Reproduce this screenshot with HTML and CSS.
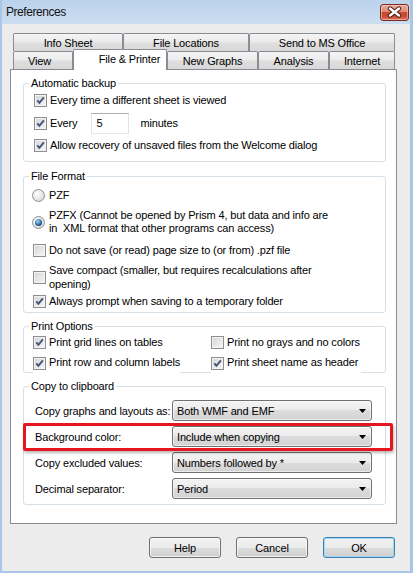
FILE: index.html
```html
<!DOCTYPE html>
<html>
<head>
<meta charset="utf-8">
<title>Preferences</title>
<link rel="stylesheet" href="styles.css">
</head>
<body>
<div class="window">
  <div class="titlebar">
    <span class="title">Preferences</span>
    <span class="close">
      <svg width="27" height="15" viewBox="0 0 27 15">
        <path d="M9 3.5 L18 10.5 M18 3.5 L9 10.5" stroke="#4a1a12" stroke-width="4.4" stroke-linecap="round"/>
        <path d="M9 3.5 L18 10.5 M18 3.5 L9 10.5" stroke="#ffffff" stroke-width="2.4" stroke-linecap="round"/>
      </svg>
    </span>
  </div>
  <div class="dlg">
    <div class="tabs">
      <div class="tabrow">
        <div class="tab t-info">Info Sheet</div>
        <div class="tab t-loc">File Locations</div>
        <div class="tab t-send">Send to MS Office</div>
      </div>
      <div class="tabrow">
        <div class="tab t-view">View</div>
        <div class="tab sel t-file">File &amp; Printer</div>
        <div class="tab t-graphs">New Graphs</div>
        <div class="tab t-anal">Analysis</div>
        <div class="tab t-net">Internet</div>
      </div>
    </div>
    <div class="panel">
      <fieldset class="group g1">
        <legend>Automatic backup</legend>
        <div class="gbody">
          <div class="opt r1"><span class="cb"><svg width="11" height="11" viewBox="0 0 11 11"><path d="M2.3 5.3 L4.4 7.8 L8.9 2.4" fill="none" stroke="#44557a" stroke-width="2"/></svg></span><span>Every time a different sheet is viewed</span></div>
          <div class="opt r2"><span class="cb"><svg width="11" height="11" viewBox="0 0 11 11"><path d="M2.3 5.3 L4.4 7.8 L8.9 2.4" fill="none" stroke="#44557a" stroke-width="2"/></svg></span><span>Every</span><span class="num">5</span><span>minutes</span></div>
          <div class="opt r3"><span class="cb"><svg width="11" height="11" viewBox="0 0 11 11"><path d="M2.3 5.3 L4.4 7.8 L8.9 2.4" fill="none" stroke="#44557a" stroke-width="2"/></svg></span><span>Allow recovery of unsaved files from the Welcome dialog</span></div>
        </div>
      </fieldset>

      <fieldset class="group g2">
        <legend>File Format</legend>
        <div class="gbody">
          <div class="opt f1"><span class="rb"></span><span>PZF</span></div>
          <div class="opt f2"><span class="rb on"></span><span class="two l13">PZFX (Cannot be opened by Prism 4, but data and info are<br>in&nbsp; XML format that other programs can access)</span></div>
          <div class="opt f3"><span class="cb"></span><span>Do not save (or read) page size to (or from) .pzf file</span></div>
          <div class="opt f4"><span class="cb"></span><span class="two l14">Save compact (smaller, but requires recalculations after<br>opening)</span></div>
          <div class="opt f5"><span class="cb"><svg width="11" height="11" viewBox="0 0 11 11"><path d="M2.3 5.3 L4.4 7.8 L8.9 2.4" fill="none" stroke="#44557a" stroke-width="2"/></svg></span><span>Always prompt when saving to a temporary folder</span></div>
        </div>
      </fieldset>

      <fieldset class="group g3">
        <legend>Print Options</legend>
        <div class="gbody">
          <div class="prow p1">
            <div class="opt pc c1"><span class="cb"><svg width="11" height="11" viewBox="0 0 11 11"><path d="M2.3 5.3 L4.4 7.8 L8.9 2.4" fill="none" stroke="#44557a" stroke-width="2"/></svg></span><span>Print grid lines on tables</span></div>
            <div class="opt pc c2"><span class="cb"></span><span>Print no grays and no colors</span></div>
          </div>
          <div class="prow p2">
            <div class="opt pc c1"><span class="cb"><svg width="11" height="11" viewBox="0 0 11 11"><path d="M2.3 5.3 L4.4 7.8 L8.9 2.4" fill="none" stroke="#44557a" stroke-width="2"/></svg></span><span>Print row and column labels</span></div>
            <div class="opt pc c2"><span class="cb"><svg width="11" height="11" viewBox="0 0 11 11"><path d="M2.3 5.3 L4.4 7.8 L8.9 2.4" fill="none" stroke="#44557a" stroke-width="2"/></svg></span><span>Print sheet name as header</span></div>
          </div>
        </div>
      </fieldset>

      <fieldset class="group g4">
        <legend>Copy to clipboard</legend>
        <div class="gbody">
          <div class="crow">
            <span class="clabel">Copy graphs and layouts as:</span>
            <div class="combo"><span>Both WMF and EMF</span><svg width="7" height="4" viewBox="0 0 7 4"><path d="M0 0 H7 L3.5 4 Z" fill="#000"/></svg></div>
          </div>
          <div class="crow hl">
            <span class="clabel">Background color:</span>
            <div class="combo"><span>Include when copying</span><svg width="7" height="4" viewBox="0 0 7 4"><path d="M0 0 H7 L3.5 4 Z" fill="#000"/></svg></div>
          </div>
          <div class="crow">
            <span class="clabel">Copy excluded values:</span>
            <div class="combo"><span>Numbers followed by *</span><svg width="7" height="4" viewBox="0 0 7 4"><path d="M0 0 H7 L3.5 4 Z" fill="#000"/></svg></div>
          </div>
          <div class="crow">
            <span class="clabel">Decimal separator:</span>
            <div class="combo"><span>Period</span><svg width="7" height="4" viewBox="0 0 7 4"><path d="M0 0 H7 L3.5 4 Z" fill="#000"/></svg></div>
          </div>
        </div>
      </fieldset>
    </div>
    <div class="buttons">
      <div class="btn">Help</div>
      <div class="btn">Cancel</div>
      <div class="btn def">OK</div>
    </div>
  </div>
</div>
</body>
</html>
```

FILE: styles.css
```css
* { box-sizing: border-box; }
html, body { margin: 0; padding: 0; }
body {
  font-family: "Liberation Sans", Arial, sans-serif;
  font-size: 11px;
  letter-spacing: -0.15px;
  color: #000;
  background: #ececec;
}
.window {
  width: 413px;
  height: 573px;
  display: flex;
  flex-direction: column;
  background: #ececec;
  border-left: 2px solid #a9c6e7;
  border-right: 3px solid #a9c6e7;
  border-bottom: 2px solid #a9c6e7;
}
.titlebar {
  height: 24px;
  flex: none;
  display: flex;
  justify-content: space-between;
  align-items: flex-start;
  padding-left: 4px;
  background: linear-gradient(#bcd2eb, #cbddf1);
}
.title {
  font-size: 12px;
  letter-spacing: -0.45px;
  line-height: 24px;
  color: #141414;
}
.close {
  width: 29px;
  height: 17px;
  margin-top: 4px;
  margin-right: 1px;
  border: 1px solid #7a2c22;
  border-radius: 3px;
  background: linear-gradient(#eaab9c, #dc8a78 45%, #c84a31 50%, #c94a33 75%, #dc7660);
  box-shadow: inset 0 0 0 1px rgba(255, 220, 210, 0.5);
  display: flex;
}
.dlg {
  flex: 1;
  padding: 9px 0 0 8px;
  display: flex;
  flex-direction: column;
}
.tabs { margin-left: 3px; }
.tabrow {
  display: flex;
  height: 18px;
  align-items: flex-start;
}
.tab {
  height: 18px;
  border: 1px solid #898c95;
  border-bottom: none;
  border-radius: 2px 2px 0 0;
  background: linear-gradient(#f5f5f5, #ebebeb 45%, #dedede 55%, #d8d8d8);
  display: flex;
  align-items: center;
  justify-content: center;
  padding-top: 1px;
  white-space: nowrap;
}
.t-info { width: 110px; }
.t-loc { width: 126px; }
.t-send { width: 146px; }
.t-view { width: 60px; padding-right: 7px; }
.t-file { width: 94px; padding-left: 19px; }
.t-graphs { width: 91px; }
.t-anal { width: 71px; }
.t-net { width: 66px; }
.tab.sel {
  height: 21px;
  margin-top: -2px;
  margin-bottom: -1px;
  background: #fff;
  position: relative;
  z-index: 1;
  padding-top: 0;
  padding-bottom: 2px;
}
.panel {
  width: 387px;
  border: 1px solid #898c95;
  background: #fff;
  padding: 6px 10px 18px 12px;
}
.group {
  margin: 0;
  padding: 0;
  border: 1px solid #d5dfe5;
  border-radius: 3px;
  min-width: 0;
}
.group legend {
  margin-left: 5px;
  padding: 0 2px;
  line-height: 15px;
  height: 15px;
}
.g2, .g3, .g4 { margin-top: 6px; }
.g2 { margin-top: 7px; }
.gbody { display: flex; flex-direction: column; }
.g1 .gbody { padding: 1px 0 8px 10px; }
.g2 .gbody { padding: 3px 0 3px 9px; }
.g3 .gbody { padding: 0 0 1px 9px; }
.g4 .gbody { padding: 6px 0 5px 11px; gap: 5px; }

.opt {
  display: flex;
  align-items: center;
  gap: 3px;
  min-height: 16px;
  white-space: nowrap;
}
.r2 { height: 24px; margin-top: 3px; }
.r3 { margin-top: 2px; }
.r2 .num {
  width: 38px;
  height: 21px;
  margin: 0 8px 0 11px;
  border: 1px solid #dbdfe6;
  border-top-color: #abadb3;
  border-left-color: #e2e3ea;
  border-right-color: #e2e3ea;
  border-bottom-color: #e3e9ef;
  padding: 2px 0 0 4px;
  line-height: 15px;
  background: #fff;
}
.f1 { gap: 4px; margin-left: -1px; }
.f2 { gap: 4px; margin-left: -1px; margin-top: 6px; }
.f3 { margin-top: 7px; }
.f4 { margin-top: 5px; }
.f5 { margin-top: 2px; }
.two.l13 { line-height: 13px; }
.two.l14 { line-height: 14px; }

.cb {
  flex: none;
  width: 13px;
  height: 13px;
  border: 1px solid #8e8f8f;
  background: linear-gradient(135deg, #d2d4d7, #f7f7f7);
  box-shadow: inset 0 0 0 1px #f2f2f2;
  display: flex;
  align-items: center;
  justify-content: center;
}
.rb {
  flex: none;
  width: 13px;
  height: 13px;
  border-radius: 50%;
  border: 1px solid #8e8f8f;
  background: radial-gradient(circle at 35% 35%, #ffffff, #e6e6e6 55%, #cfcfcf);
  display: flex;
  align-items: center;
  justify-content: center;
}
.rb.on::after {
  content: "";
  width: 7px;
  height: 7px;
  border-radius: 50%;
  background: radial-gradient(circle at 40% 35%, #a9dbf7, #3a80c0 45%, #15355f 80%);
}

.prow { display: flex; }
.p2 { margin-top: 5px; }
.pc { background: #fff; }
.c1 { width: 147px; margin-right: 31px; }
.c2 { width: 150px; }
.p2 .pc {
  height: 20px;
  margin-bottom: -4px;
  align-items: flex-start;
  padding-top: 1px;
}
.p2 .pc .cb { margin-top: 1px; }

.crow {
  display: flex;
  align-items: center;
  height: 21px;
}
.clabel { width: 137px; flex: none; white-space: nowrap; }
.combo {
  width: 200px;
  height: 21px;
  border: 1px solid #707070;
  border-radius: 3px;
  background: linear-gradient(#f3f3f3, #ebebeb 50%, #dddddd 50%, #d2d2d2);
  box-shadow: inset 0 0 0 1px rgba(255, 255, 255, 0.6);
  display: flex;
  align-items: center;
  justify-content: space-between;
  padding: 0 5px 0 4px;
}
.crow.hl { position: relative; }
.crow.hl::after {
  content: "";
  position: absolute;
  top: -3px;
  bottom: -4px;
  left: -12px;
  right: -8px;
  border: 3px solid #e5161d;
  border-radius: 2px;
  box-shadow: 1px 2px 3px rgba(0, 0, 0, 0.28);
}

.buttons {
  display: flex;
  justify-content: flex-end;
  gap: 15px;
  margin-top: 13px;
  padding-right: 15px;
}
.btn {
  width: 72px;
  height: 21px;
  border: 1px solid #707070;
  border-radius: 3px;
  background: linear-gradient(#f2f2f2, #ebebeb 50%, #dddddd 50%, #cfcfcf);
  box-shadow: inset 0 0 0 1px rgba(255, 255, 255, 0.7);
  display: flex;
  align-items: center;
  justify-content: center;
}
.btn.def {
  border-color: #3c7fb1;
  box-shadow: inset 0 0 0 1px #9fd9f5;
}
```
